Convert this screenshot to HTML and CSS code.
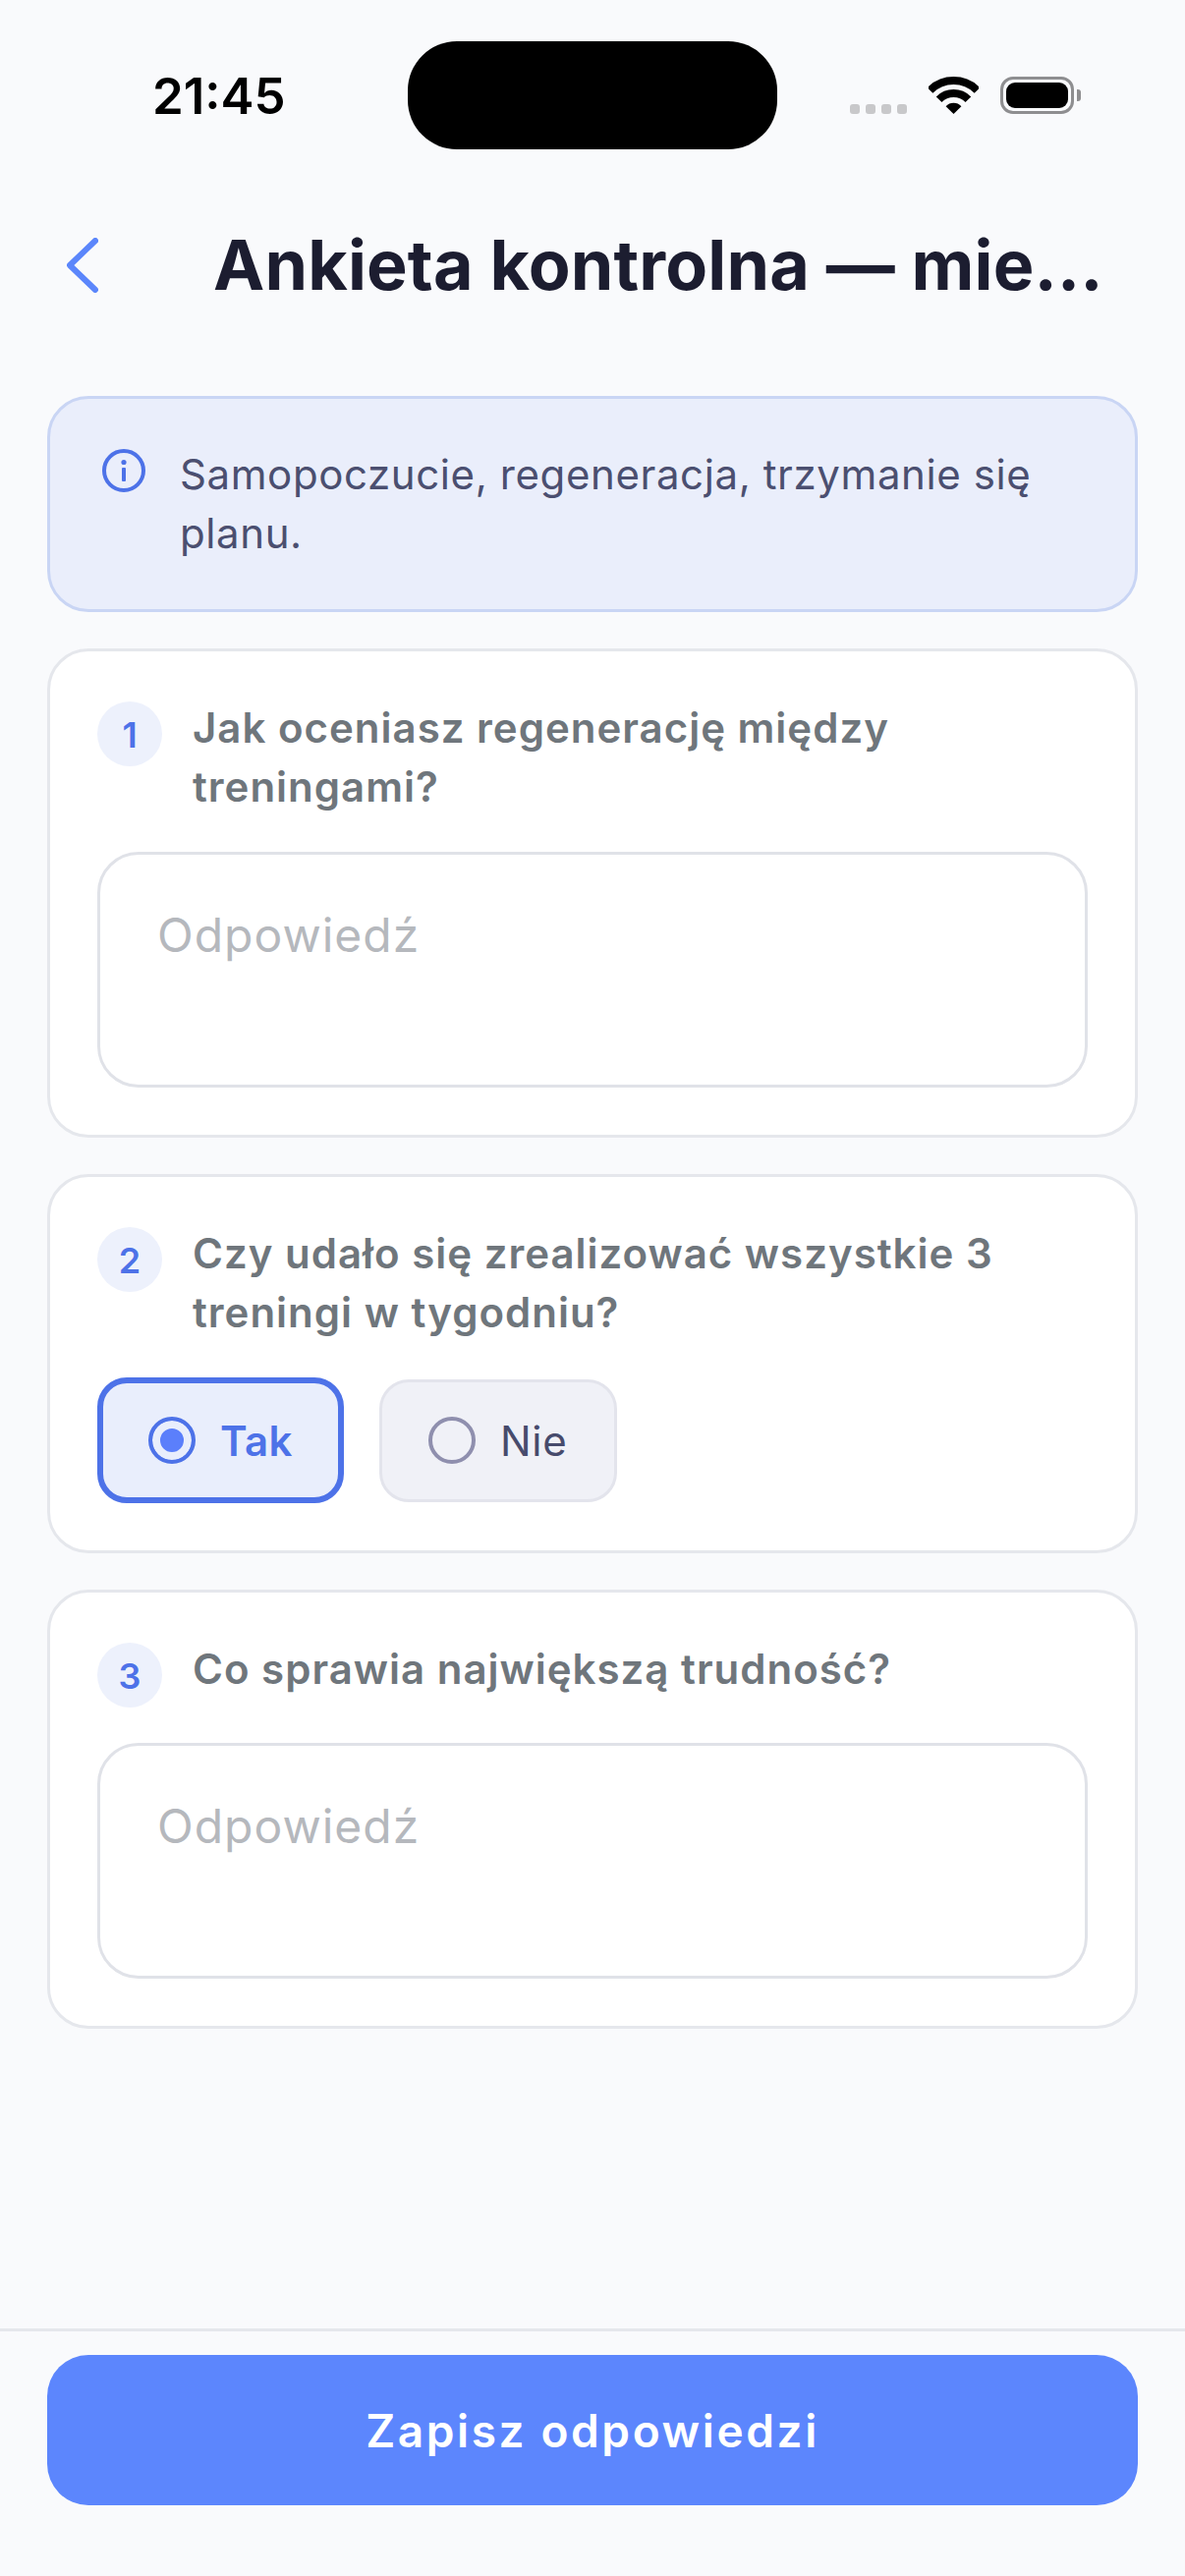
FILE: index.html
```html
<!DOCTYPE html>
<html lang="pl">
<head>
    <meta charset="UTF-8">
    <meta name="viewport" content="width=device-width, initial-scale=1.0">
    <title>Ankieta kontrolna</title>
    <link rel="stylesheet" href="styles.css">
</head>
<body>

<div class="page">
    <div class="status-bar">
        <span class="status-time">21:45</span>
        <div class="island"></div>
        <div class="status-icons">
            <div class="signal"><i></i><i></i><i></i><i></i></div>
            <svg class="wifi" viewBox="0 0 51 38" width="51" height="38">
                <path d="M1.5 14 A34 34 0 0 1 49.5 14" fill="none" stroke="#000" stroke-width="8"/>
                <path d="M10.6 23.2 A21 21 0 0 1 40.4 23.2" fill="none" stroke="#000" stroke-width="8"/>
                <path d="M25.5 38 L17.6 30.2 A11 11 0 0 1 33.4 30.2 Z" fill="#000"/>
            </svg>
            <div class="battery"><div class="battery-level"></div></div>
            <div class="battery-nub"></div>
        </div>
    </div>

    <header class="top-bar">
        <svg class="back" viewBox="0 0 32 56" width="32" height="56">
            <path d="M29 3 L3 28 L29 53" fill="none" stroke="#5b86fb" stroke-width="6" stroke-linecap="round" stroke-linejoin="round"/>
        </svg>
        <h1>Ankieta kontrolna — mie…</h1>
    </header>

    <main class="content">
        <div class="info">
            <svg class="info-icon" viewBox="0 0 44 44" width="44" height="44">
                <circle cx="22" cy="22" r="20" fill="none" stroke="#4d72e8" stroke-width="4"/>
                <circle cx="22" cy="13.5" r="2.6" fill="#4d72e8"/>
                <rect x="20" y="19" width="4" height="14" rx="1" fill="#4d72e8"/>
            </svg>
            <p>Samopoczucie, regeneracja, trzymanie się planu.</p>
        </div>

        <section class="card">
            <div class="question">
                <span class="badge">1</span>
                <p>Jak oceniasz regenerację między treningami?</p>
            </div>
            <textarea class="answer" placeholder="Odpowiedź"></textarea>
        </section>

        <section class="card">
            <div class="question">
                <span class="badge">2</span>
                <p>Czy udało się zrealizować wszystkie 3 treningi w tygodniu?</p>
            </div>
            <div class="options">
                <div class="option selected"><span class="radio"></span>Tak</div>
                <div class="option"><span class="radio"></span>Nie</div>
            </div>
        </section>

        <section class="card">
            <div class="question">
                <span class="badge">3</span>
                <p>Co sprawia największą trudność?</p>
            </div>
            <textarea class="answer" placeholder="Odpowiedź"></textarea>
        </section>
    </main>

    <footer class="footer">
        <button type="button" class="save">Zapisz odpowiedzi</button>
    </footer>
</div>

</body>
</html>
```

FILE: styles.css
```css
* {
    box-sizing: border-box;
}

body {
    margin: 0;
    font-family: Inter, "Noto Sans", sans-serif;
    background-color: #f9fafc;
}

.page {
    display: flex;
    flex-direction: column;
    height: 2622px;
}

/* Status bar */
.status-bar {
    display: flex;
    align-items: flex-start;
    height: 186px;
    padding: 42px 104px 0 155px;
}

.status-time {
    width: 260px;
    margin-top: 26px;
    font-size: 51px;
    line-height: 60px;
    font-weight: 600;
    color: #000;
}

.island {
    width: 376px;
    height: 110px;
    border-radius: 50px;
    background-color: #000;
}

.status-icons {
    display: flex;
    align-items: flex-end;
    margin-left: 74px;
    margin-top: 36px;
}

.signal {
    display: flex;
    gap: 6px;
    margin-right: 22px;
}

.signal i {
    width: 10px;
    height: 10px;
    border-radius: 3px;
    background-color: #c8c8ca;
}

.wifi {
    margin-right: 22px;
}

.battery {
    width: 75px;
    height: 38px;
    padding: 3px;
    border: 3px solid #8e8e90;
    border-radius: 13px;
}

.battery-level {
    height: 100%;
    border-radius: 9px;
    background-color: #000;
}

.battery-nub {
    width: 4px;
    height: 12px;
    margin: 0 0 13px 3px;
    border-radius: 0 3px 3px 0;
    background-color: #8e8e90;
}

/* Top bar */
.top-bar {
    display: flex;
    align-items: center;
    height: 96px;
    margin-top: 36px;
    padding-left: 68px;
}

.back {
    flex-shrink: 0;
}

.top-bar h1 {
    margin: 0 0 0 117px;
    font-size: 70px;
    line-height: 80px;
    font-weight: 700;
    letter-spacing: 0.15px;
    color: #1c1d30;
    white-space: nowrap;
}

/* Content */
.content {
    flex: 1;
    display: flex;
    flex-direction: column;
    gap: 37px;
    padding: 85px 48px 0;
}

.info {
    display: flex;
    align-items: flex-start;
    gap: 35px;
    padding: 47px 48px 47px 53px;
    border: 3px solid #c9d5f4;
    border-radius: 42px;
    background-color: #eaeefb;
}

.info-icon {
    flex-shrink: 0;
    margin-top: 4px;
}

.info p {
    margin: 0;
    font-size: 42px;
    line-height: 60px;
    letter-spacing: 0.6px;
    color: #4b4f70;
}

.card {
    padding: 48px;
    border: 3px solid #e5e7ec;
    border-radius: 42px;
    background-color: #fff;
}

.question {
    display: flex;
    align-items: flex-start;
    gap: 31px;
}

.badge {
    flex-shrink: 0;
    width: 66px;
    height: 66px;
    margin-top: 3px;
    border-radius: 50%;
    background-color: #edf1fc;
    color: #4d72e8;
    font-size: 36px;
    line-height: 68px;
    font-weight: 600;
    text-align: center;
}

.question p {
    margin: 0;
    font-size: 42px;
    line-height: 60px;
    font-weight: 600;
    letter-spacing: 1px;
    color: #6f767c;
}

.answer {
    display: block;
    width: 100%;
    height: 240px;
    margin-top: 36px;
    padding: 52px 58px;
    border: 3px solid #e0e2e8;
    border-radius: 42px;
    background-color: #fff;
    font-family: inherit;
    font-size: 48px;
    line-height: 60px;
    letter-spacing: 1px;
    resize: none;
    outline: none;
}

.answer::placeholder {
    color: #b5b8bd;
    opacity: 1;
}

.options {
    display: flex;
    align-items: center;
    gap: 36px;
    margin-top: 36px;
}

.option {
    display: flex;
    align-items: center;
    gap: 25px;
    height: 125px;
    padding: 0 47px;
    border: 3px solid #e3e4ec;
    border-radius: 30px;
    background-color: #f0f1f7;
    font-size: 42px;
    letter-spacing: 0.8px;
    color: #474b6c;
}

.option.selected {
    height: 128px;
    padding: 0 46px;
    border: 6px solid #4d72e8;
    background-color: #e9eefc;
    color: #4d72e8;
    font-weight: 600;
    letter-spacing: 0.4px;
}

.radio {
    width: 48px;
    height: 48px;
    border: 4px solid #8f8fae;
    border-radius: 50%;
}

.selected .radio {
    border-color: #4d72e8;
    background-color: #5b7ffb;
    box-shadow: inset 0 0 0 8px #e9eefc;
}

/* Footer */
.footer {
    padding: 24px 48px 72px;
    border-top: 3px solid #e5e7ec;
}

.save {
    display: block;
    width: 100%;
    height: 153px;
    border: none;
    border-radius: 42px;
    background-color: #5c86fd;
    color: #fff;
    font-family: inherit;
    font-size: 46px;
    font-weight: 600;
    letter-spacing: 2.6px;
}
```
